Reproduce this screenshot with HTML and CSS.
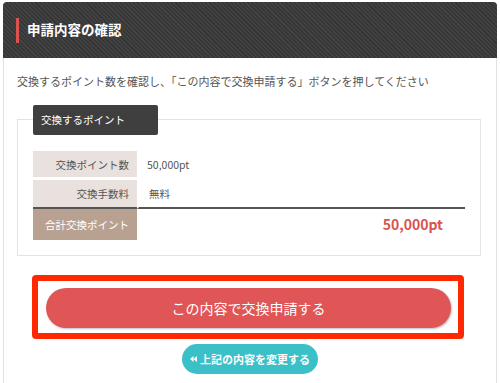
FILE: index.html
```html
<!DOCTYPE html>
<html lang="ja">
<head>
<meta charset="utf-8">
<link rel="stylesheet" href="styles.css">
</head>
<body>
<div class="panel">
  <div class="head">
    <span class="bar"></span>
    <h1 class="title">申請内容の確認</h1>
  </div>
  <div class="body">
    <p class="lead">交換するポイント数を確認し、「この内容で交換申請する」ボタンを押してください</p>
    <div class="box">
      <div class="legend">交換するポイント</div>
      <table class="tbl">
        <tr class="row row-first">
          <th class="lbl">交換ポイント数</th>
          <td class="val">50,000pt</td>
        </tr>
        <tr class="row row-last">
          <th class="lbl">交換手数料</th>
          <td class="val">無料</td>
        </tr>
        <tr class="row row-total">
          <th class="lbl lbl-total">合計交換ポイント</th>
          <td class="val val-total">50,000pt</td>
        </tr>
      </table>
    </div>
    <div class="highlight">
      <button class="submit" type="button">この内容で交換申請する</button>
    </div>
    <div class="back-wrap">
      <button class="back" type="button"><svg class="ico" width="7" height="6" viewBox="0 0 7 6"><path d="M3.5 0 L0 3 L3.5 6 Z M7 0 L3.5 3 L7 6 Z" fill="#fff"/></svg>上記の内容を変更する</button>
    </div>
  </div>
</div>
</body>
</html>
```
FILE: styles.css
```css
html, body {
  margin: 0;
  padding: 0;
  background: #fff;
}
body {
  font-family: "Noto Sans CJK JP", "Noto Sans", sans-serif;
  color: #555;
}
.panel {
  margin: 2px 3px 0 3px;
  border: 1px solid #e2e2e2;
  border-radius: 4px;
  height: 420px;
  box-sizing: border-box;
}
.head {
  height: 56px;
  border-radius: 4px 4px 0 0;
  background-color: #3b3b3b;
  background-image: repeating-linear-gradient(45deg, #424242 0 1.5px, #363636 1.5px 3px);
  display: flex;
  align-items: center;
  padding-left: 13px;
  margin: -1px -1px 0 -1px;
}
.bar {
  width: 3px;
  height: 25px;
  background: #d9534f;
  margin-top: 1px;
}
.title {
  margin: 0 0 0 8px;
  font-size: 13.5px;
  font-weight: bold;
  color: #fff;
  line-height: 1;
}
.body {
  padding: 0 12px;
}
.lead {
  margin: 15px 0 0 1px;
  font-size: 11px;
  line-height: 16px;
  color: #555;
}
.box {
  position: relative;
  margin-top: 30px;
  margin-left: 1px;
  width: 464px;
  border: 1px solid #e3e3e3;
  box-sizing: border-box;
  padding: 31px 15px 15px 15px;
}
.legend {
  position: absolute;
  left: 15px;
  top: -15px;
  width: 125px;
  height: 30px;
  background: #3f3f3f;
  color: #fff;
  font-size: 10.5px;
  line-height: 30px;
  padding-left: 8px;
  box-sizing: border-box;
  border-radius: 2px;
}
.tbl {
  width: 100%;
  border-collapse: separate;
  border-spacing: 0;
}
.tbl th, .tbl td {
  box-sizing: content-box;
  padding-top: 0;
  padding-bottom: 0;
  line-height: 15px;
  vertical-align: middle;
}
.lbl {
  width: 96px;
  background: #e9e1dd;
  font-weight: normal;
  font-size: 10.5px;
  text-align: right;
  padding: 0 8px 0 0;
  color: #555;
}
.val {
  font-size: 10.5px;
  padding-left: 10px;
  color: #555;
}
.row-first .lbl, .row-first .val {
  height: 26px;
  border-bottom: 3px solid #fff;
}
.row-last .lbl, .row-last .val {
  height: 27px;
  border-bottom: 2px solid #555;
}
.row-last .val {
  border-left: 2px solid #fff;
}
.row-total .lbl, .row-total .val {
  height: 31px;
}
.lbl-total {
  background: #b9a192;
  color: #fff;
}
.val-total {
  text-align: right;
  padding-right: 22px;
  font-size: 14px;
  font-weight: bold;
  color: #d9534f;
}
.highlight {
  margin: 19px 0 0 16px;
  width: 432px;
  height: 64px;
  box-sizing: border-box;
  border: 6px solid #ff2800;
  border-radius: 4px;
  padding: 7px 0 0 8px;
}
.submit {
  display: block;
  width: 405px;
  height: 40px;
  border: none;
  border-radius: 20px;
  background: #e05656;
  box-shadow: 1px 1px 2px rgba(0,0,0,0.25);
  color: #fff;
  font-family: "Noto Sans CJK JP", "Noto Sans", sans-serif;
  font-size: 14px;
  padding: 0;
}
.back-wrap {
  display: flex;
  justify-content: center;
  margin-top: 5px;
}
.back {
  width: 136px;
  height: 30px;
  border: none;
  border-radius: 15px;
  background: #3cc0c8;
  color: #fff;
  font-family: "Noto Sans CJK JP", "Noto Sans", sans-serif;
  font-size: 11px;
  font-weight: bold;
  padding: 0;
  display: flex;
  align-items: center;
  justify-content: center;
  gap: 3px;
}
.ico {
  display: block;
}
```
